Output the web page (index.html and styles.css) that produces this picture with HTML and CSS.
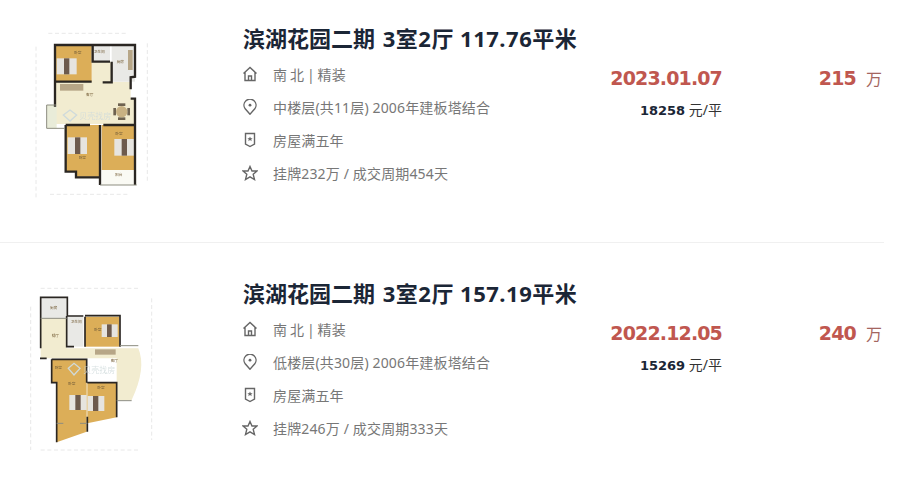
FILE: index.html
```html
<!DOCTYPE html>
<html lang="zh-CN">
<head>
    <meta charset="UTF-8">
    <title>滨湖花园二期 成交记录</title>
    <link rel="stylesheet" href="styles.css">
</head>
<body>
    <ul class="deal-list">
        <li class="deal">
            <svg class="plan" viewBox="0 -60 729 720" width="243" height="240">
                <!-- dimension lines -->
                <g class="dim">
                    <path d="M145 40H385M150 523H385M108 80V535M442 70V490"/>
                </g>
                <!-- floors -->
                <path class="floor" d="M168 185H275V125H335V185H392V235H405V312H168Z"/>
                <rect class="balcony" x="140" y="255" width="30" height="70"/>
                <rect class="room" x="168" y="78" width="107" height="107"/>
                <rect class="wet" x="278" y="78" width="52" height="47"/>
                <rect class="wet" x="335" y="78" width="70" height="107"/>
                <path class="room" d="M197 315H300V470H228V455H197Z"/>
                <rect class="room" x="305" y="315" width="100" height="135"/>
                <rect class="white" x="305" y="450" width="105" height="45"/>
                <!-- furniture -->
                <g transform="translate(170 115)">
                    <rect class="sheet" width="60" height="48"/>
                    <rect class="cover" x="22" width="16" height="48"/>
                </g>
                <g transform="translate(203 352)">
                    <rect class="sheet" width="58" height="50"/>
                    <rect class="cover" x="22" width="16" height="50"/>
                </g>
                <g transform="translate(343 357)">
                    <rect class="sheet" width="60" height="50"/>
                    <rect class="cover" x="22" width="16" height="50"/>
                </g>
                <rect class="cabinet" x="180" y="192" width="70" height="20"/>
                <rect class="cabinet" x="384" y="90" width="14" height="60"/>
                <g class="chairs">
                    <rect x="354" y="250" width="22" height="8"/>
                    <rect x="354" y="292" width="22" height="8"/>
                    <rect x="340" y="264" width="8" height="22"/>
                    <rect x="382" y="264" width="8" height="22"/>
                </g>
                <circle class="table" cx="365" cy="275" r="17"/>
                <!-- walls -->
                <path class="wall" d="M165 260V75H290M245 75H405V170L392 172V208M392 236H405V495M168 185H275M308 187H335V125M278 78V125H330M197 315V455H228V472H300V495M197 315H270M310 315H405M300 315V470"/>
                <path class="wall-thin" d="M140 255H168M140 325H195M140 255V325M300 495H410"/>
                <!-- labels -->
                <text class="label" x="222" y="102">卧室</text>
                <text class="label" x="281" y="98">卫生间</text>
                <text class="label" x="350" y="128">厨房</text>
                <text class="label" x="258" y="228">客厅</text>
                <text class="label" x="236" y="418">卧室</text>
                <text class="label" x="346" y="344">卧室</text>
                <text class="label" x="345" y="468">阳台</text>
                <text class="mark" x="238" y="296">贝壳找房</text>
                <path class="mark-logo" d="M190 285L210 270L230 285L210 303Z"/>
            </svg>
            <div class="info">
                <h2 class="title">滨湖花园二期 <span>3室2厅 117.76平米</span></h2>
                <ul class="meta">
                    <li class="tight">
                        <svg class="icon" viewBox="0 0 16 16"><path d="M1.5 7.5L8 1.5L14.5 7.5M3 6.5V14.5H13V6.5M6.5 14.5V10H9.5V14.5"/></svg>
                        南 北 | 精装
                    </li>
                    <li>
                        <svg class="icon" viewBox="0 0 16 16"><path d="M8 15.2L3.2 9.8A6 6 0 1 1 12.8 9.8Z"/><circle class="dot" cx="8" cy="6.2" r="1.4"/></svg>
                        中楼层(共11层) 2006年建板塔结合
                    </li>
                    <li>
                        <svg class="icon" viewBox="0 0 16 16"><path d="M3.5 1.5H12.5V12L8 14.5L3.5 12Z"/><path class="dot" d="M8 4.4L8.8 6.2H10.6L9.2 7.4L9.7 9.2L8 8.1L6.3 9.2L6.8 7.4L5.4 6.2H7.2Z"/></svg>
                        房屋满五年
                    </li>
                    <li>
                        <svg class="icon" viewBox="0 0 16 16"><path d="M8 1.5L10 6H15L11.2 9.3L12.5 14.5L8 11.8L3.5 14.5L4.8 9.3L1 6H6Z"/></svg>
                        挂牌232万 / 成交周期454天
                    </li>
                </ul>
            </div>
            <div class="date-col">
                <div class="date">2023.01.07</div>
                <div class="unit-price"><b>18258</b> 元/平</div>
            </div>
            <div class="price"><b>215</b><span>万</span></div>
        </li>
        <li class="deal">
            <svg class="plan" viewBox="0 -75 729 720" width="243" height="240">
                <g class="dim">
                    <path d="M122 25H415M122 510H415M92 80V510M455 55V480"/>
                </g>
                <path class="floor" d="M122 115H200V205H415Q440 265 395 360H350V235H122Z"/>
                <rect class="wet" x="122" y="55" width="78" height="60"/>
                <rect class="wet" x="200" y="110" width="50" height="90"/>
                <rect class="room" x="255" y="110" width="103" height="90"/>
                <path class="room" d="M155 238H260V455L170 487V308H155Z"/>
                <path class="room" d="M262 308H350V412L262 430Z"/>
                <g transform="translate(305 133)">
                    <rect class="sheet" width="48" height="38"/>
                    <rect class="cover" x="16" width="14" height="38"/>
                </g>
                <g transform="translate(208 345)">
                    <rect class="sheet" width="52" height="45"/>
                    <rect class="cover" x="18" width="16" height="45"/>
                </g>
                <g transform="translate(263 348)">
                    <rect class="sheet" width="50" height="45"/>
                    <rect class="cover" x="16" width="16" height="45"/>
                </g>
                <rect class="cabinet" x="285" y="208" width="62" height="16"/>
                <path class="wall wall-sm" d="M122 205V52H202V108H250M255 107H360V200M200 108V200H222M255 110V200M120 235H140M155 238H260V308M155 238V308H170V487M262 308H350V412M262 410V455"/>
                <path class="wall-thin" d="M122 115H200M360 197H415M350 362H395M170 430H190M240 430H262"/>
                <text class="label" x="150" y="88">厨房</text>
                <text class="label" x="155" y="172">餐厅</text>
                <text class="label" x="212" y="130">卫生间</text>
                <text class="label" x="282" y="152">卧室</text>
                <text class="label" x="332" y="246">客厅</text>
                <text class="label" x="164" y="268">卧室</text>
                <text class="label" x="204" y="316">卧室</text>
                <text class="label" x="292" y="326">卧室</text>
                <text class="mark" x="250" y="278">贝壳找房</text>
                <path class="mark-logo" d="M205 265L222 250L240 265L222 285Z"/>
            </svg>
            <div class="info">
                <h2 class="title">滨湖花园二期 <span>3室2厅 157.19平米</span></h2>
                <ul class="meta">
                    <li class="tight">
                        <svg class="icon" viewBox="0 0 16 16"><path d="M1.5 7.5L8 1.5L14.5 7.5M3 6.5V14.5H13V6.5M6.5 14.5V10H9.5V14.5"/></svg>
                        南 北 | 精装
                    </li>
                    <li>
                        <svg class="icon" viewBox="0 0 16 16"><path d="M8 15.2L3.2 9.8A6 6 0 1 1 12.8 9.8Z"/><circle class="dot" cx="8" cy="6.2" r="1.4"/></svg>
                        低楼层(共30层) 2006年建板塔结合
                    </li>
                    <li>
                        <svg class="icon" viewBox="0 0 16 16"><path d="M3.5 1.5H12.5V12L8 14.5L3.5 12Z"/><path class="dot" d="M8 4.4L8.8 6.2H10.6L9.2 7.4L9.7 9.2L8 8.1L6.3 9.2L6.8 7.4L5.4 6.2H7.2Z"/></svg>
                        房屋满五年
                    </li>
                    <li>
                        <svg class="icon" viewBox="0 0 16 16"><path d="M8 1.5L10 6H15L11.2 9.3L12.5 14.5L8 11.8L3.5 14.5L4.8 9.3L1 6H6Z"/></svg>
                        挂牌246万 / 成交周期333天
                    </li>
                </ul>
            </div>
            <div class="date-col">
                <div class="date">2022.12.05</div>
                <div class="unit-price"><b>15269</b> 元/平</div>
            </div>
            <div class="price"><b>240</b><span>万</span></div>
        </li>
    </ul>
</body>
</html>
```

FILE: styles.css
```css
body {
    margin: 0;
    background-color: #fff;
    font-family: "Noto Sans", "Noto Sans CJK SC", sans-serif;
    overflow: hidden;
}

.deal-list {
    list-style: none;
    margin: 0;
    padding: 0;
    width: 884px;
}

.deal {
    display: flex;
    height: 243px;
    box-sizing: border-box;
    margin-bottom: 12px;
    border-bottom: 1px solid #f0f0f0;
}

.deal:last-child {
    border-bottom: none;
    margin-bottom: 0;
    height: 222px;
}

.plan {
    flex: none;
    display: block;
    filter: blur(0.6px);
}

/* floor plan drawing */
.floor { fill: #f2ecd0; }
.balcony { fill: #e9ecd9; }
.room { fill: #dcae58; }
.wet { fill: #e9e9e6; }
.white { fill: #fafaf4; }
.dim path { fill: none; stroke: #dcdcdc; stroke-width: 2; stroke-dasharray: 12 8; }
.wall { fill: none; stroke: #2a2622; stroke-width: 7; }
.wall-sm { stroke-width: 5; }
.wall-thin { fill: none; stroke: #8d8d80; stroke-width: 3; }
.sheet { fill: #e6e4df; }
.cover { fill: #6d5a4c; }
.cabinet { fill: #b7a687; }
.table { fill: #c8b183; }
.chairs rect { fill: #6e6250; }
.label { font-size: 11px; fill: #77603a; }
.mark { font-size: 24px; fill: #cfdadb; opacity: 0.8; }
.mark-logo { fill: none; stroke: #cfdadb; stroke-width: 4; }

.info {
    flex: none;
    width: 367px;
}

.title {
    margin: 22px 0 0;
    font-size: 22px;
    line-height: 32px;
    font-weight: 700;
    color: #1b2636;
    white-space: nowrap;
    word-spacing: 2px;
}

.title span {
    letter-spacing: 0.5px;
    word-spacing: 0;
}

.meta {
    list-style: none;
    margin: 3px 0 0;
    padding: 0;
    font-size: 14px;
    color: #777;
    letter-spacing: 0.15px;
}

.meta li {
    display: flex;
    align-items: center;
    gap: 15px;
    height: 33px;
    margin-left: -1px;
}

.meta .tight {
    word-spacing: -1px;
}

.icon {
    width: 16px;
    height: 16px;
    flex: none;
    fill: none;
    stroke: #666;
    stroke-width: 1.4;
}

.icon .dot {
    fill: #666;
    stroke: none;
}

.date-col {
    flex: none;
    width: 112px;
    text-align: right;
    padding-top: 64px;
}

.date {
    font-family: "DejaVu Sans", sans-serif;
    font-size: 19px;
    line-height: 28px;
    font-weight: 700;
    letter-spacing: -0.85px;
    color: #c0574f;
    white-space: nowrap;
}

.unit-price {
    margin-top: 8px;
    font-size: 14px;
    line-height: 20px;
    color: #333;
}

.unit-price b {
    font-family: "DejaVu Sans", sans-serif;
    font-size: 13px;
    color: #1b2636;
}

.price {
    flex: none;
    box-sizing: border-box;
    width: 162px;
    height: 92px;
    display: flex;
    justify-content: flex-end;
    align-items: baseline;
    gap: 10px;
    padding: 64px 2px 0 0;
    line-height: 28px;
    color: #c0574f;
}

.price b {
    font-family: "DejaVu Sans", sans-serif;
    font-size: 19px;
    letter-spacing: -0.85px;
}

.price span {
    font-size: 16px;
    color: #a4665f;
}
```
